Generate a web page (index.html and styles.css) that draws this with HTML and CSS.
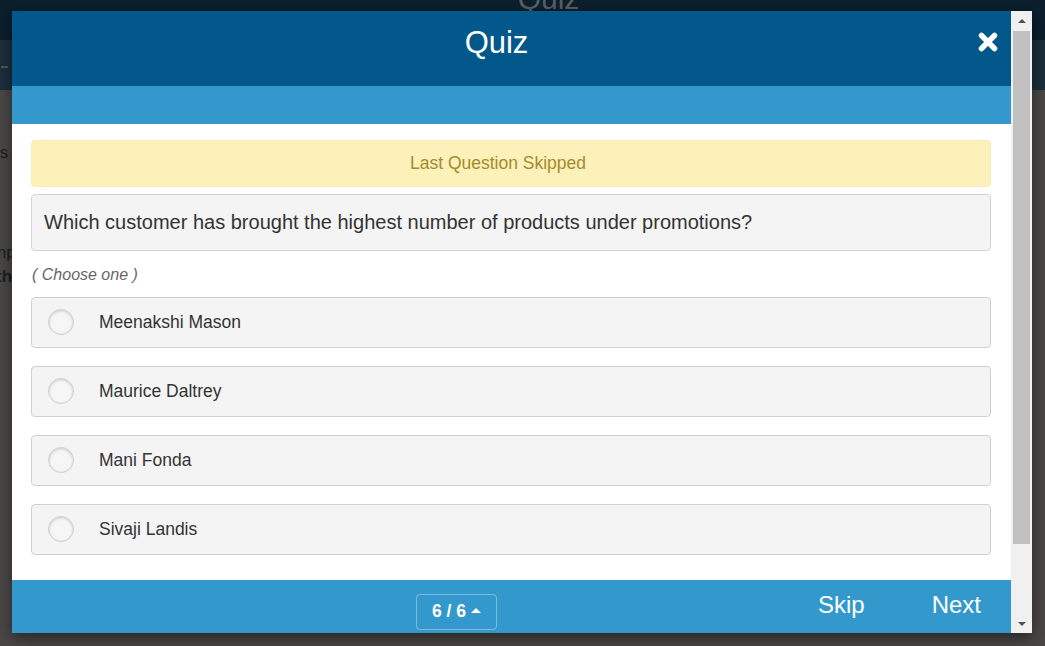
FILE: index.html
```html
<!DOCTYPE html>
<html>
<head>
<meta charset="utf-8">
<link rel="stylesheet" href="styles.css">
</head>
<body>
<div class="page">
  <div class="page-top"><span class="page-title">Quiz</span></div>
  <div class="page-nav"><span class="nav-dash"></span></div>
  <div class="page-body">
    <p class="bg-line l1">is</p>
    <p class="bg-line l2">mp</p>
    <p class="bg-line l3">th</p>
  </div>
</div>

<div class="modal">
  <div class="modal-main">
    <div class="modal-header">
      <h1 class="modal-title">Quiz</h1>
      <button class="close-btn" aria-label="Close">
        <svg width="20" height="20" viewBox="0 0 20 20"><path d="M3.5 3.5 L16.5 16.5 M16.5 3.5 L3.5 16.5" stroke="#fff" stroke-width="5.5" stroke-linecap="round"/></svg>
      </button>
    </div>
    <div class="modal-subbar"></div>
    <div class="modal-body">
      <div class="alert">Last Question Skipped</div>
      <div class="question">Which customer has brought the highest number of products under promotions?</div>
      <div class="hint">( Choose one )</div>
      <div class="options">
        <label class="option"><span class="radio"></span><span class="opt-text">Meenakshi Mason</span></label>
        <label class="option"><span class="radio"></span><span class="opt-text">Maurice Daltrey</span></label>
        <label class="option"><span class="radio"></span><span class="opt-text">Mani Fonda</span></label>
        <label class="option"><span class="radio"></span><span class="opt-text">Sivaji Landis</span></label>
      </div>
    </div>
    <div class="modal-footer">
      <button class="pager">6 / 6 <span class="caret"></span></button>
      <div class="actions">
        <button class="act">Skip</button>
        <button class="act">Next</button>
      </div>
    </div>
  </div>
  <div class="scrollbar">
    <span class="arrow up"></span>
    <div class="track"><div class="thumb"></div></div>
    <span class="arrow down"></span>
  </div>
</div>
</body>
</html>
```

FILE: styles.css
```css
* { box-sizing: border-box; }
html, body { margin: 0; padding: 0; }
body {
  width: 1045px;
  height: 646px;
  overflow: hidden;
  background: #4a4847;
  font-family: "Liberation Sans", Arial, sans-serif;
  position: relative;
}
.page-top {
  height: 40px;
  background: #0b1f2d;
  display: flex;
  justify-content: center;
  overflow: hidden;
}
.page-title {
  color: #5b5f62;
  font-size: 30px;
  line-height: 30px;
  margin-top: -16px;
  margin-left: 52px;
}
.page-nav {
  height: 50px;
  background: #1b2f3b;
  position: relative;
}
.nav-dash {
  position: absolute;
  left: 1px; top: 26px;
  width: 7px; height: 2px;
  background: #555;
}
.page-body { position: relative; }
.bg-line {
  position: absolute;
  margin: 0;
  font-size: 17px;
  color: #1d1d1d;
}
.l1 { left: -4px; top: 53px; }
.l2 { left: -8px; top: 153px; }
.l3 { left: -4px; top: 177px; font-weight: bold; }

.modal {
  position: absolute;
  top: 11px;
  left: 12px;
  width: 1020px;
  height: 622px;
  display: flex;
  box-shadow: 0 5px 15px rgba(0,0,0,0.5);
}
.modal-main {
  width: 999px;
  display: flex;
  flex-direction: column;
  background: #fff;
}
.modal-header {
  height: 75px;
  background: #02588a;
  display: flex;
  align-items: center;
  padding-right: 30px;
  position: relative;
}
.modal-title {
  flex: 1;
  margin: 0;
  text-align: center;
  color: #fff;
  font-weight: normal;
  font-size: 31px;
  line-height: 1;
  margin-top: -12px;
}
.close-btn {
  position: absolute;
  right: 13px;
  top: 21px;
  background: none;
  border: 0;
  padding: 0;
  width: 20px;
  height: 20px;
  display: flex;
}
.modal-subbar {
  height: 38px;
  background: #3498cc;
}
.modal-body {
  flex: 1;
  padding: 16px 20px 0 19px;
}
.alert {
  height: 47px;
  background: #fcf2b9;
  border: 1px solid #faebbd;
  border-radius: 4px;
  color: #a38a2e;
  font-size: 17.5px;
  display: flex;
  align-items: center;
  justify-content: center;
  padding-right: 26px;
  padding-bottom: 1px;
  margin-bottom: 7px;
}
.question {
  height: 57px;
  background: #f4f4f4;
  border: 1px solid #d4d4d4;
  border-radius: 4px;
  color: #333;
  font-size: 20px;
  display: flex;
  align-items: center;
  padding-left: 12px;
  padding-bottom: 1px;
}
.hint {
  font-style: italic;
  color: #666;
  font-size: 16px;
  margin: 15px 0 0 1px;
  line-height: 18px;
  height: 31px;
}
.options {
  display: flex;
  flex-direction: column;
  gap: 18px;
}
.option {
  height: 51px;
  background: #f4f4f4;
  border: 1px solid #d0d0d0;
  border-radius: 4px;
  display: flex;
  align-items: center;
  padding-left: 16px;
  position: relative;
}
.radio {
  width: 26px;
  height: 26px;
  border-radius: 50%;
  border: 1px solid #cfcfcf;
  background: #f6f6f6;
  box-shadow: inset 0 1px 3px rgba(0,0,0,0.18);
  flex: none;
  margin-top: -1px;
}
.opt-text {
  margin-left: 25px;
  color: #333;
  font-size: 17.5px;
}
.modal-footer {
  height: 53px;
  background: #3399cc;
  display: flex;
  align-items: center;
  padding-left: 404px;
  padding-right: 15px;
}
.pager {
  width: 81px;
  height: 36px;
  margin-top: 11px;
  background: transparent;
  border: 1px solid rgba(255,255,255,0.35);
  border-radius: 4px;
  color: #fff;
  font-family: inherit;
  font-weight: bold;
  font-size: 17.5px;
  display: flex;
  align-items: center;
  justify-content: center;
  gap: 5px;
  padding: 0 0 1px;
}
.caret {
  width: 0; height: 0;
  border-left: 5px solid transparent;
  border-right: 5px solid transparent;
  border-bottom: 5px solid #fff;
  margin-top: -2px;
}
.actions {
  margin-left: auto;
  display: flex;
  gap: 35px;
}
.act {
  background: none;
  border: 0;
  color: #fff;
  font-family: inherit;
  font-size: 24px;
  padding: 0 16px;
  margin-top: -3px;
}
.act:last-child { padding-right: 15px; }

.scrollbar {
  width: 21px;
  background: #f0f0f0;
  display: flex;
  flex-direction: column;
  align-items: center;
}
.arrow {
  width: 0; height: 0;
  border-left: 4px solid transparent;
  border-right: 4px solid transparent;
  flex: none;
}
.arrow.up { border-bottom: 4px solid #505050; margin: 8px 0 8px; }
.arrow.down { border-top: 4px solid #505050; margin: 0 0 7px; }
.track {
  flex: 1;
  width: 100%;
  padding: 0 2px;
}
.thumb {
  height: 513px;
  background: #c1c1c1;
}
```
